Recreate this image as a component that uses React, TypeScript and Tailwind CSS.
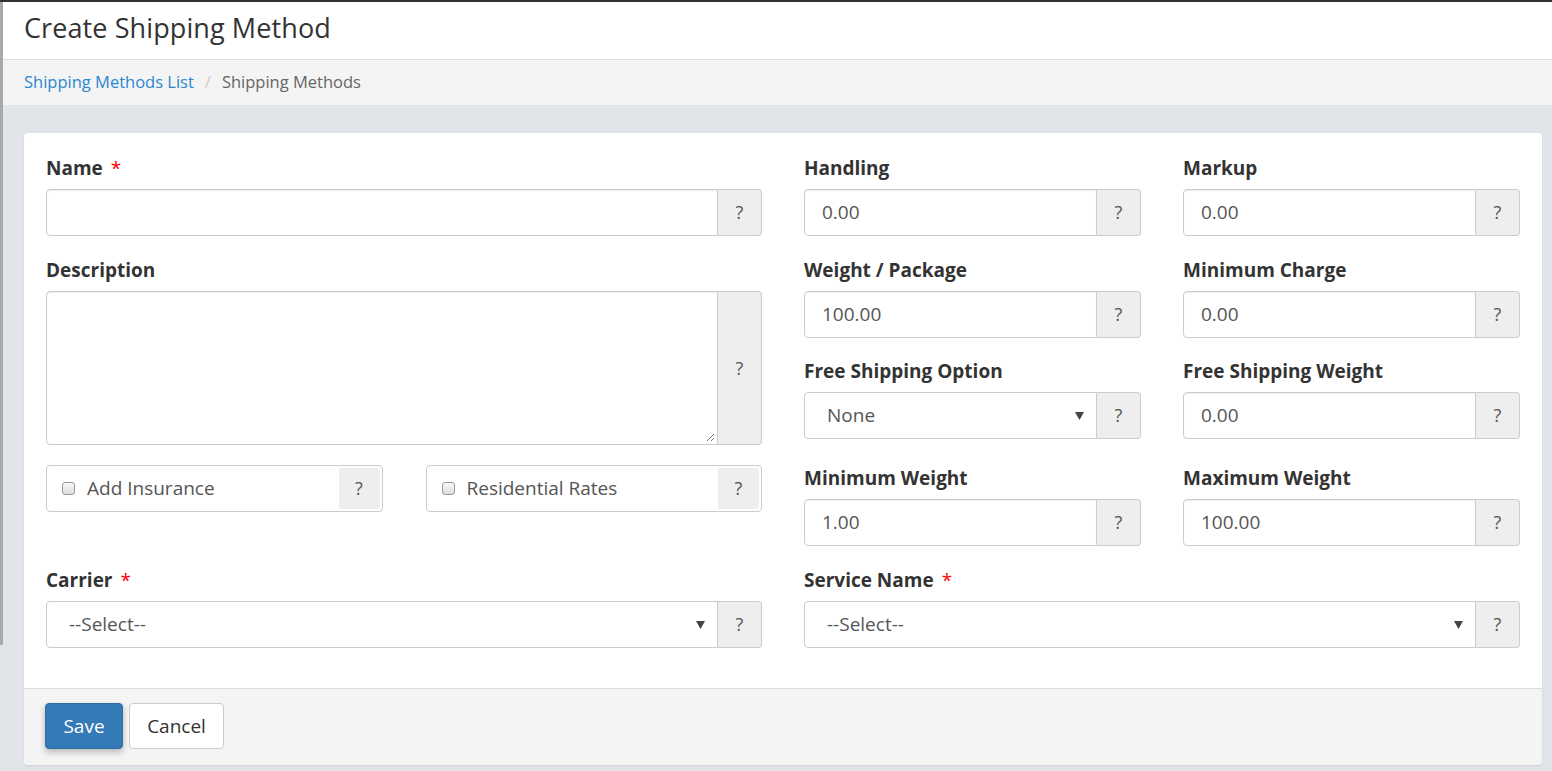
import React from "react";

const font = { fontFamily: '"Open Sans", "Noto Sans", sans-serif' };

const Label = ({ text, required }: { text: string; required?: boolean }) => (
  <div className="h-[25px] leading-[25px] mb-[8px] text-[19px] font-bold text-[#333]">
    {text}
    {required && <span className="ml-[8px] font-normal text-[#ff0000]">*</span>}
  </div>
);

const Help = ({ tall }: { tall?: boolean }) => (
  <div
    className={`w-[44px] shrink-0 flex items-center justify-center bg-[#eeeeee] border border-l-0 border-[#cccccc] rounded-r-[4px] text-[18px] text-[#555] ${
      tall ? "h-[154px]" : "h-[47px]"
    }`}
  >
    ?
  </div>
);

const TextField = ({ label, value, required }: { label: string; value?: string; required?: boolean }) => (
  <div>
    <Label text={label} required={required} />
    <div className="flex">
      <div className="flex-1 h-[47px] flex items-center px-[17px] border border-[#cccccc] rounded-l-[4px] bg-white text-[19px] text-[#555] shadow-[inset_0_1px_1px_rgba(0,0,0,0.075)]">
        {value}
      </div>
      <Help />
    </div>
  </div>
);

const SelectField = ({ label, value, required }: { label: string; value: string; required?: boolean }) => (
  <div>
    <Label text={label} required={required} />
    <div className="flex">
      <div className="flex-1 h-[47px] flex items-center justify-between pl-[22px] pr-[12px] border border-[#cccccc] rounded-l-[4px] bg-white text-[19px] text-[#555]">
        <span>{value}</span>
        <svg width="9" height="8" viewBox="0 0 9 8">
          <path d="M0 0 H9 L4.5 8 Z" fill="#444" />
        </svg>
      </div>
      <Help />
    </div>
  </div>
);

const CheckField = ({ label }: { label: string }) => (
  <div className="flex h-[47px] border border-[#cccccc] rounded-[4px] bg-white p-[2px] pl-[15px]">
    <div className="flex-1 flex items-center gap-[12px] text-[19px] text-[#555]">
      <span className="w-[13px] h-[13px] rounded-[3px] border border-[#999] bg-gradient-to-b from-[#fafafa] to-[#dcdcdc]" />
      <span>{label}</span>
    </div>
    <div className="w-[41px] bg-[#eeeeee] rounded-r-[3px] flex items-center justify-center text-[18px] text-[#555]">?</div>
  </div>
);

export default function App() {
  return (
    <div className="relative min-h-[771px] bg-[#e1e5e9] border-t-2 border-[#333]" style={font}>
      <div className="absolute left-0 top-0 w-[3px] h-[643px] bg-[#a9a9a9]" />
      <div className="bg-white h-[58px] flex items-center pl-[24px] pb-[5px] border-b border-[#dddddd]">
        <h1 className="text-[27px] font-normal text-[#333] tracking-[0.1px]">Create Shipping Method</h1>
      </div>
      <div className="bg-[#f4f4f4] h-[45px] flex items-center pl-[24px] text-[16.5px]">
        <span className="text-[#2a87d2]">Shipping Methods List</span>
        <span className="px-[11px] text-[#cccccc]">/</span>
        <span className="text-[#666]">Shipping Methods</span>
      </div>

      <div className="pt-[28px] pl-[24px] pr-[10px] pb-[6px]">
        <div className="bg-white rounded-[4px] shadow-[0_1px_2px_rgba(0,0,0,0.1)] overflow-hidden">
          <div className="px-[22px] pt-[23px] pb-[40px]">
            <div className="grid grid-cols-2 gap-x-[42px]">
              <div>
                <TextField label="Name" required />
                <div className="mt-[22px]">
                  <Label text="Description" />
                  <div className="flex">
                    <div className="relative flex-1 h-[154px] border border-[#cccccc] rounded-l-[4px] bg-white shadow-[inset_0_1px_1px_rgba(0,0,0,0.075)]">
                      <svg className="absolute right-[2px] bottom-[2px]" width="10" height="10" viewBox="0 0 10 10">
                        <path d="M9 2 L2 9 M9 6 L6 9" stroke="#777" strokeWidth="1" />
                      </svg>
                    </div>
                    <Help tall />
                  </div>
                </div>
                <div className="mt-[20px] grid grid-cols-2 gap-x-[43px]">
                  <CheckField label="Add Insurance" />
                  <CheckField label="Residential Rates" />
                </div>
              </div>
              <div className="grid grid-cols-2 gap-x-[42px] content-start">
                <TextField label="Handling" value="0.00" />
                <TextField label="Markup" value="0.00" />
                <div className="mt-[22px]">
                  <TextField label="Weight / Package" value="100.00" />
                </div>
                <div className="mt-[22px]">
                  <TextField label="Minimum Charge" value="0.00" />
                </div>
                <div className="mt-[21px]">
                  <SelectField label="Free Shipping Option" value="None" />
                </div>
                <div className="mt-[21px]">
                  <TextField label="Free Shipping Weight" value="0.00" />
                </div>
                <div className="mt-[27px]">
                  <TextField label="Minimum Weight" value="1.00" />
                </div>
                <div className="mt-[27px]">
                  <TextField label="Maximum Weight" value="100.00" />
                </div>
              </div>
            </div>
            <div className="mt-[22px] grid grid-cols-2 gap-x-[42px]">
              <SelectField label="Carrier" value="--Select--" required />
              <SelectField label="Service Name" value="--Select--" required />
            </div>
          </div>
          <div className="bg-[#f4f4f4] border-t border-[#dddddd] h-[77px] flex items-start gap-[6px] pt-[14px] pl-[21px]">
            <button className="w-[78px] h-[46px] rounded-[4px] bg-[#337ab7] border border-[#2e6da4] text-white text-[19px] shadow-[0_3px_6px_rgba(0,0,0,0.25)]">
              Save
            </button>
            <button className="w-[95px] h-[46px] rounded-[4px] bg-white border border-[#cccccc] text-[#333] text-[19px]">
              Cancel
            </button>
          </div>
        </div>
      </div>
    </div>
  );
}
